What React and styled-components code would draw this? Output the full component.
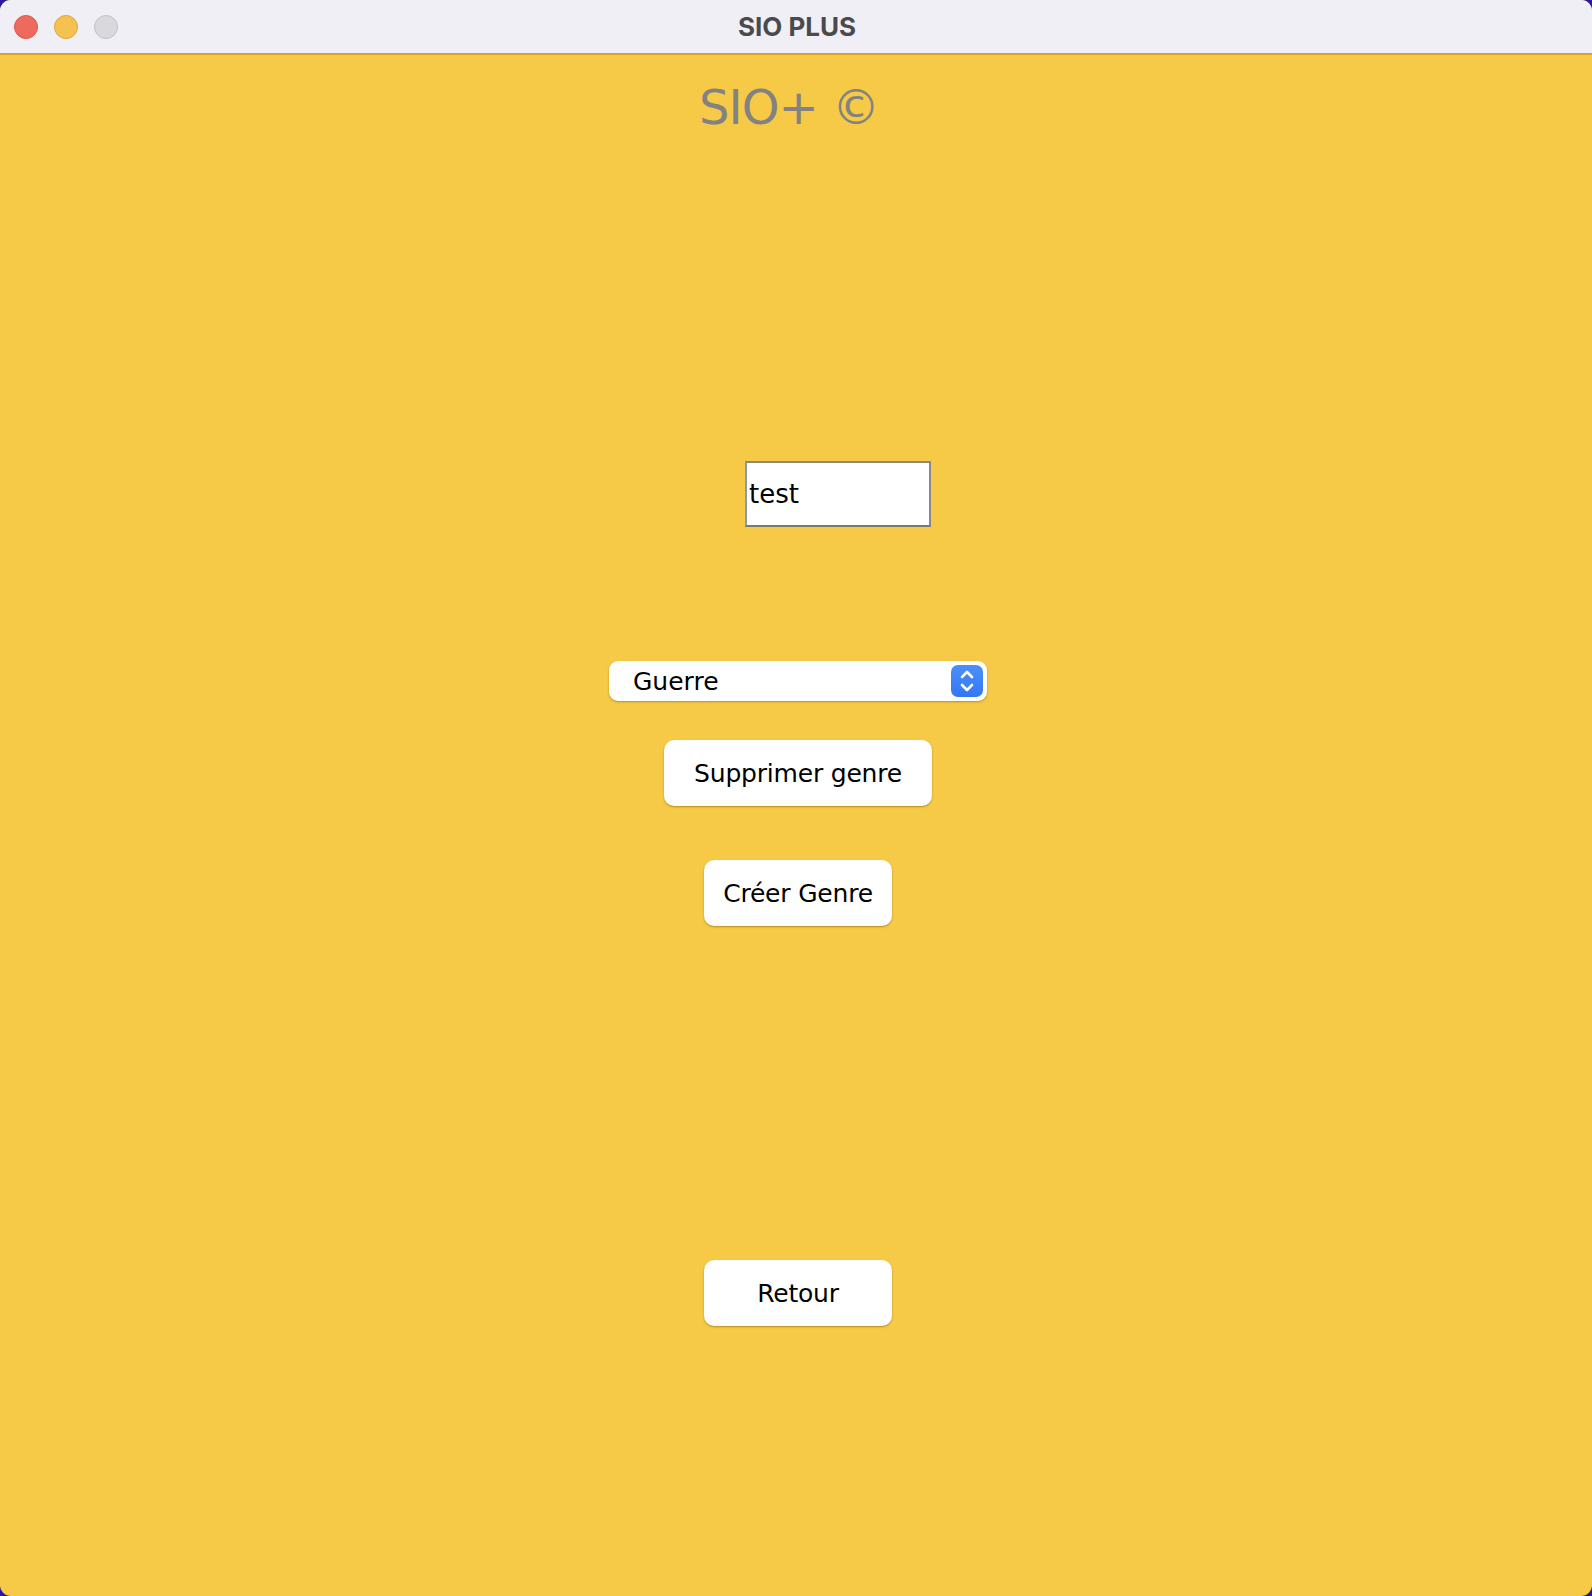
import React from "react";
import styled, { createGlobalStyle } from "styled-components";

const Global = createGlobalStyle`
  html, body { margin: 0; padding: 0; background: #2b1b9c; }
  body { width: 1592px; height: 1596px; overflow: hidden; }
  #root { width: 1592px; height: 1596px; }
`;

const Window = styled.div`
  width: 1592px;
  height: 1596px;
  border-radius: 11px;
  overflow: hidden;
  display: flex;
  flex-direction: column;
  background: #f6ca46;
  font-family: "DejaVu Sans", "Liberation Sans", sans-serif;
`;

const TitleBar = styled.div`
  height: 55px;
  flex: none;
  box-sizing: border-box;
  background: #f0eff5;
  border-bottom: 2px solid #d6a424;
  display: flex;
  align-items: center;
  position: relative;
`;

const Lights = styled.div`
  display: flex;
  gap: 16px;
  padding-left: 14px;
`;

const Light = styled.span`
  width: 24px;
  height: 24px;
  border-radius: 50%;
  box-sizing: border-box;
  background: ${(p) => p.$c};
  border: 1px solid ${(p) => p.$b};
`;

const WindowTitle = styled.div`
  position: absolute;
  left: 0;
  right: 0;
  top: 0;
  bottom: 0;
  display: flex;
  align-items: center;
  justify-content: center;
  font-family: Inter, "Liberation Sans", sans-serif;
  font-weight: 700;
  font-size: 26px;
  color: #4a4a4c;
  padding-left: 2px;
`;

const Content = styled.div`
  flex: 1;
  display: flex;
  flex-direction: column;
  align-items: center;
  padding-left: 4px;
`;

const Heading = styled.div`
  margin-top: 22px;
  font-size: 48px;
  line-height: 60px;
  letter-spacing: -1px;
  color: #828282;
  margin-right: 18px;
`;

const InputRow = styled.div`
  margin-top: 324px;
  padding-left: 80px;
`;

const TextInput = styled.div`
  width: 186px;
  height: 66px;
  box-sizing: border-box;
  background: #fff;
  border: 2px solid;
  border-color: #8a8a7a #888 #7a7a6a #8a9aaa;
  display: flex;
  align-items: center;
  padding-left: 2px;
  font-size: 26px;
  color: #000;
`;

const Select = styled.div`
  margin-top: 134px;
  width: 378px;
  height: 40px;
  box-sizing: border-box;
  background: #fff;
  border-radius: 9px;
  box-shadow: 0 1px 2px rgba(120, 90, 0, 0.5);
  display: flex;
  align-items: center;
  justify-content: space-between;
  padding: 0 4px 0 24px;
  font-size: 25px;
  color: #000;
`;

const Stepper = styled.span`
  width: 32px;
  height: 32px;
  border-radius: 7px;
  background: linear-gradient(#4d8ff8, #3477f5);
  display: flex;
  align-items: center;
  justify-content: center;
`;

const Button = styled.div`
  margin-top: ${(p) => p.$mt}px;
  width: ${(p) => p.$w}px;
  height: 66px;
  box-sizing: border-box;
  background: #fff;
  border-radius: 10px;
  box-shadow: 0 1px 2px rgba(130, 95, 0, 0.55);
  display: flex;
  align-items: center;
  justify-content: center;
  font-size: 25px;
  letter-spacing: -0.2px;
  color: #000;
`;

export default function App() {
  return (
    <>
      <Global />
      <Window>
        <TitleBar>
          <Lights>
            <Light $c="#ee6a5f" $b="#d65a50" />
            <Light $c="#f5c252" $b="#dca83e" />
            <Light $c="#d9d8dd" $b="#c2c1c6" />
          </Lights>
          <WindowTitle>SIO PLUS</WindowTitle>
        </TitleBar>
        <Content>
          <Heading>SIO+ ©</Heading>
          <InputRow>
            <TextInput>test</TextInput>
          </InputRow>
          <Select>
            <span>Guerre</span>
            <Stepper>
              <svg width="18" height="26" viewBox="0 0 18 26" fill="none" stroke="#fff" strokeWidth="2.6" strokeLinecap="round" strokeLinejoin="round">
                <path d="M4 9 L9 4 L14 9" />
                <path d="M4 17 L9 22 L14 17" />
              </svg>
            </Stepper>
          </Select>
          <Button $mt={39} $w={268}>Supprimer genre</Button>
          <Button $mt={54} $w={188}>Créer Genre</Button>
          <Button $mt={334} $w={188}>Retour</Button>
        </Content>
      </Window>
    </>
  );
}
